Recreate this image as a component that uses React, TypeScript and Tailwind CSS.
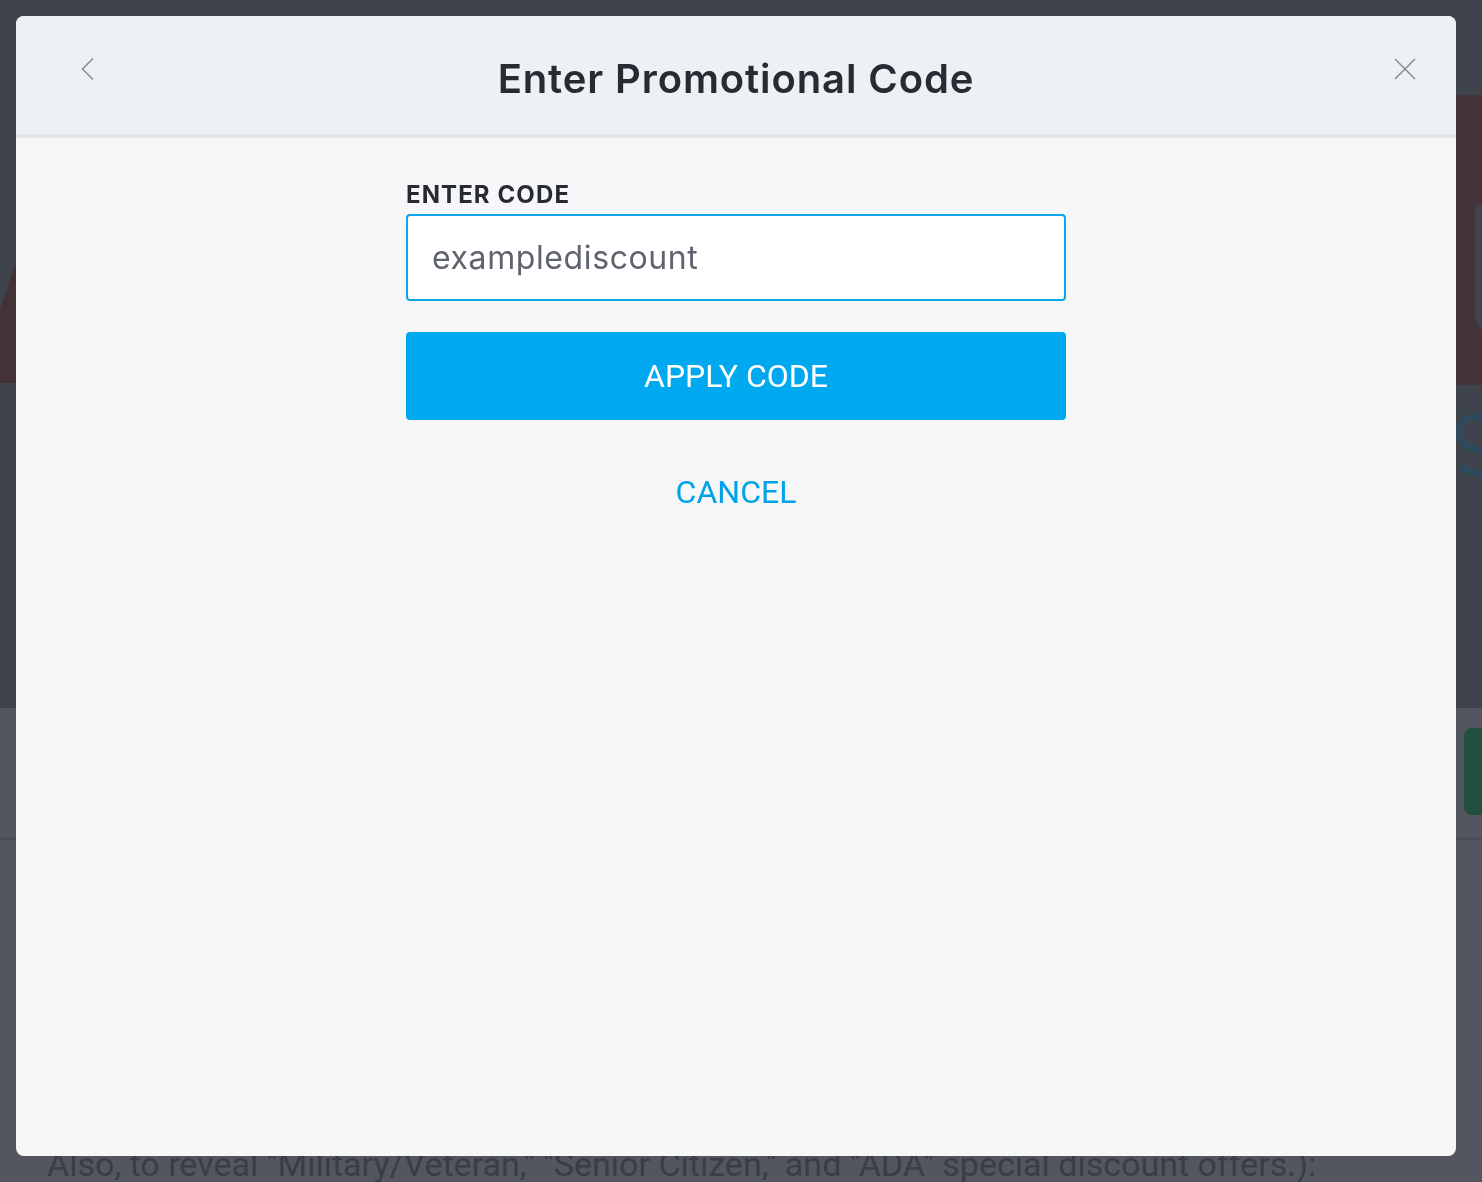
import React from "react";

function BackdropArt() {
  // dimmed hero lettering peeking out from behind the dialog
  return (
    <svg width="1482" height="708" viewBox="0 0 1482 708" className="block">
      <path d="M0 310 L16 262 L16 383 L0 383 Z" fill="#433336" />
      <path d="M1456 95 H1482 V385 H1456 Z" fill="#44343a" />
      <path d="M1475 205 H1482 V330 C1478 328 1475 322 1475 312 Z" fill="#3f434b" />
      <path
        d="M1482 418 C1466 414 1458 424 1459 434 C1460 446 1472 448 1482 452 M1462 466 C1468 472 1476 474 1482 474"
        stroke="#2f4a5c"
        strokeWidth="7"
        fill="none"
      />
    </svg>
  );
}

function Page() {
  return (
    <div className="w-[1482px] h-[1182px] overflow-hidden bg-[#53565e]">
      <div className="h-[708px] bg-[#3f434b]">
        <BackdropArt />
      </div>
      <div className="flex h-[132px] items-start overflow-hidden border-b-2 border-[#4a4d55] pt-5">
        <div className="ml-[1464px] h-[87px] w-[220px] shrink-0 rounded-lg bg-[#22503f]" />
      </div>
      <p className="whitespace-nowrap pl-[47px] pt-[304px] font-['Roboto',sans-serif] text-[34px] leading-[40px] text-[#393d47]">
        Also, to reveal "Military/Veteran," "Senior Citizen," and "ADA" special discount offers.):
      </p>
    </div>
  );
}

function PromoDialog() {
  return (
    <div className="fixed left-4 top-4 flex h-[1140px] w-[1440px] flex-col overflow-hidden rounded-lg bg-[#f7f7f9]">
      <div className="grid h-[120px] shrink-0 grid-cols-[1fr_auto_1fr] items-start border-b-2 border-[#e1e4e8] bg-[#edf1f4] shadow-sm">
        <div className="flex items-start pl-[65px] pt-[41px]">
          <button className="block">
            <svg width="13" height="24" viewBox="0 0 13 24" fill="none" className="block">
              <path d="M12 1.5 L1.5 12 L12 22.5" stroke="#8b9097" strokeWidth="1.6" />
            </svg>
          </button>
        </div>
        <h1 className="pt-[39px] font-['Inter',sans-serif] text-[40px] font-semibold leading-[48px] tracking-[0.9px] text-[#272b33]">
          Enter Promotional Code
        </h1>
        <div className="flex items-start justify-end pr-[40px] pt-[42px]">
          <button className="block">
            <svg width="22" height="22" viewBox="0 0 22 22" fill="none" className="block">
              <path d="M1 1 L21 21 M21 1 L1 21" stroke="#8b9097" strokeWidth="1.6" />
            </svg>
          </button>
        </div>
      </div>

      <div className="mx-auto flex w-[660px] flex-col pt-[45px]">
        <label className="mb-[5px] font-['Inter',sans-serif] text-[24px] font-bold leading-[28px] tracking-[1.1px] text-[#262a33]">
          ENTER CODE
        </label>
        <div className="flex h-[87px] items-center rounded border-2 border-[#0aa6ec] bg-white pl-6">
          <span className="font-['Inter',sans-serif] text-[32px] tracking-[0.6px] text-[#5f636d]">examplediscount</span>
        </div>
        <button className="mt-[31px] flex h-[88px] items-center justify-center rounded bg-[#00a8f0] font-['Roboto',sans-serif] text-[32px] text-white">
          APPLY CODE
        </button>
        <button className="mt-[53px] self-center font-['Roboto',sans-serif] text-[32px] leading-[38px] text-[#00a3e8]">
          CANCEL
        </button>
      </div>
    </div>
  );
}

export default function App() {
  return (
    <div className="relative">
      <Page />
      <PromoDialog />
    </div>
  );
}
